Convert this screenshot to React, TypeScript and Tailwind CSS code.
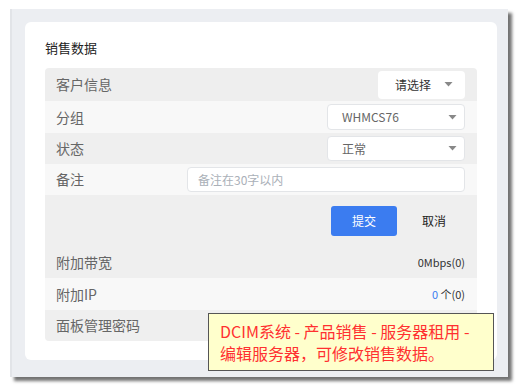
import React from "react";

const font = { fontFamily: '"Noto Sans CJK SC", "Noto Sans", sans-serif' };

const Caret: React.FC = () => (
  <svg width="9" height="5" viewBox="0 0 9 5" className="shrink-0">
    <path d="M0.5 0h8L4.5 4.5z" fill="#888" />
  </svg>
);

interface RowProps {
  label: string;
  bg: string;
  h: string;
  extra?: string;
  children?: React.ReactNode;
}

const Row: React.FC<RowProps> = ({ label, bg, h, extra = "", children }) => (
  <div className={`flex items-center justify-between pl-[11px] pr-[12px] ${bg} ${h} ${extra}`}>
    <span className="text-[14px] text-[#666]">{label}</span>
    {children}
  </div>
);

const App: React.FC = () => {
  return (
    <div className="relative w-[521px] h-[390px] bg-white pt-[9px] pl-[10px]" style={font}>
      {/* 窗口外框 */}
      <div className="w-[498px] h-[368px] bg-[#eceef2] border-l-2 border-[#e2e4e8] pt-[13px] pl-[13px] pr-[11px] shadow-[4px_4px_3px_rgba(0,0,0,0.55)]">
        <div className="bg-white rounded-md h-[338px] pt-[16px] px-[20px]">
          <h3 className="text-[13px] leading-[20px] text-[#222] mb-[10px]">销售数据</h3>

          <div className="flex flex-col">
            <Row label="客户信息" bg="bg-[#eeeeee]" h="h-[33px]" extra="rounded-t">
              <div className="flex items-center justify-end gap-[13px] w-[87px] h-[28px] bg-white rounded pr-[12px]">
                <span className="text-[12px] text-[#333]">请选择</span>
                <Caret />
              </div>
            </Row>
            <Row label="分组" bg="bg-[#f8f8f8]" h="h-[32px]">
              <div className="flex items-center justify-between w-[138px] h-[26px] bg-white border border-[#e3e5e8] rounded pl-[14px] pr-[7px]">
                <span className="text-[12px] text-[#666]">WHMCS76</span>
                <Caret />
              </div>
            </Row>
            <Row label="状态" bg="bg-[#efefef]" h="h-[31px]">
              <div className="flex items-center justify-between w-[138px] h-[25px] bg-white border border-[#e3e5e8] rounded pl-[14px] pr-[7px]">
                <span className="text-[12px] text-[#666]">正常</span>
                <Caret />
              </div>
            </Row>
            <Row label="备注" bg="bg-[#f8f8f8]" h="h-[31px]">
              <div className="flex items-center w-[278px] h-[25px] bg-white border border-[#e3e5e8] rounded pl-[10px]">
                <span className="text-[12px] text-[#aab0b8]">备注在30字以内</span>
              </div>
            </Row>

            {/* 按钮 */}
            <div className="flex items-start justify-end bg-[#efefef] h-[51px] pt-[11px] pr-[10px] gap-[4px]">
              <button className="w-[66px] h-[30px] rounded-[3px] bg-[#3b7cf0] text-white text-[12px]">提交</button>
              <button className="w-[66px] h-[30px] text-[12px] text-[#222]">取消</button>
            </div>

            <Row label="附加带宽" bg="bg-[#efefef]" h="h-[32px]">
              <span className="text-[11px] text-[#333]">0Mbps(0)</span>
            </Row>
            <Row label="附加IP" bg="bg-[#f8f8f8]" h="h-[32px]">
              <span className="text-[11px] text-[#333]">
                <span className="text-[#3b7cf0]">0</span> 个(0)
              </span>
            </Row>
            <Row label="面板管理密码" bg="bg-[#efefef]" h="h-[31px]" extra="rounded-b" />
          </div>
        </div>
      </div>

      {/* 提示框 */}
      <div className="absolute left-[208px] top-[313px] w-[286px] h-[58px] bg-[#ffffcc] border border-[#555] pl-[11px] pt-[6px] text-[16px] leading-[22px] text-[#ff3030]">
        <p>DCIM系统 - 产品销售 - 服务器租用 -</p>
        <p>编辑服务器，可修改销售数据。</p>
      </div>
    </div>
  );
};

export default App;
